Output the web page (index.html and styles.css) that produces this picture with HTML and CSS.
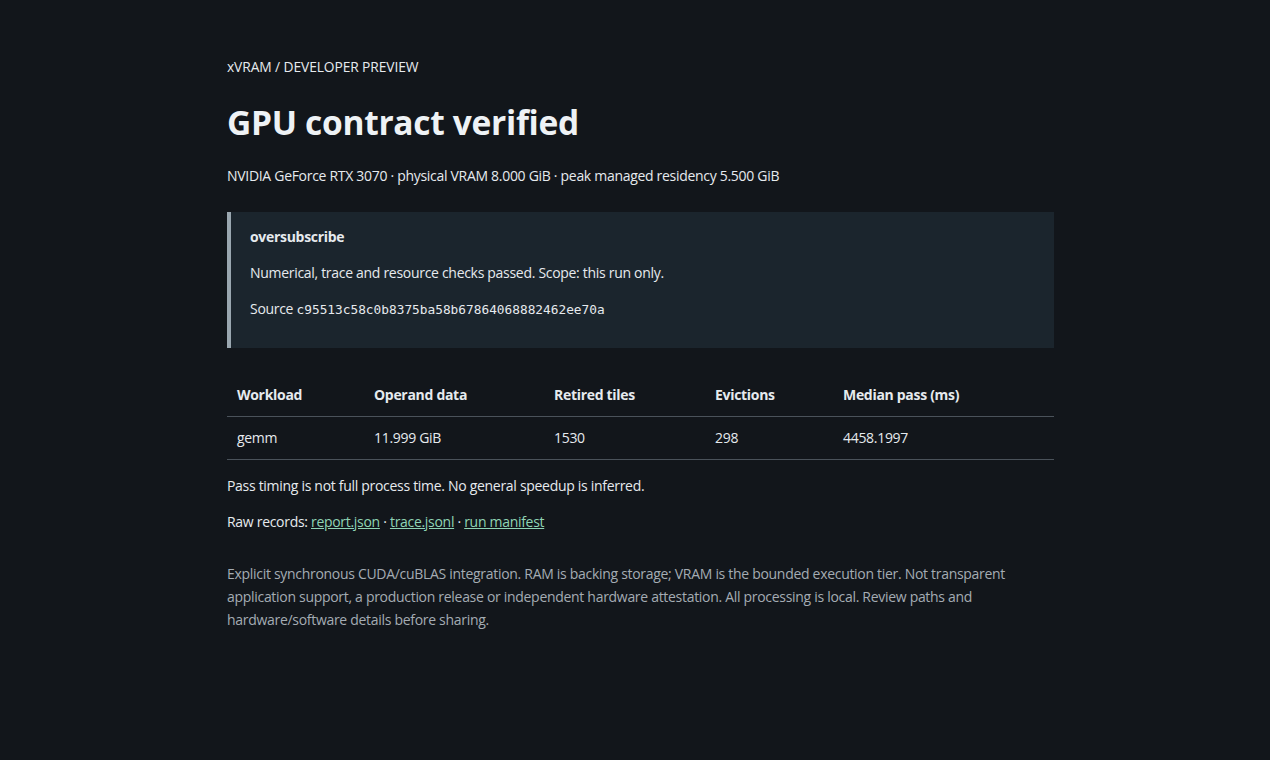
FILE: index.html
```html
<!DOCTYPE html>
<html lang="en">
<head>
    <meta charset="UTF-8">
    <meta name="viewport" content="width=device-width, initial-scale=1.0">
    <title>xVRAM - GPU contract verified</title>
    <link rel="stylesheet" href="styles.css">
</head>
<body>
    <main class="page">
        <p class="eyebrow">xVRAM / DEVELOPER PREVIEW</p>
        <h1>GPU contract verified</h1>
        <p class="device">NVIDIA GeForce RTX 3070 · physical VRAM 8.000 GiB · peak managed residency 5.500 GiB</p>

        <section class="verdict">
            <p class="verdict-name">oversubscribe</p>
            <p>Numerical, trace and resource checks passed. Scope: this run only.</p>
            <p>Source <code>c95513c58c0b8375ba58b67864068882462ee70a</code></p>
        </section>

        <table class="results">
            <thead>
                <tr>
                    <th class="col-workload">Workload</th>
                    <th class="col-operand">Operand data</th>
                    <th class="col-tiles">Retired tiles</th>
                    <th class="col-evictions">Evictions</th>
                    <th>Median pass (ms)</th>
                </tr>
            </thead>
            <tbody>
                <tr>
                    <td>gemm</td>
                    <td>11.999 GiB</td>
                    <td>1530</td>
                    <td>298</td>
                    <td>4458.1997</td>
                </tr>
            </tbody>
        </table>

        <p class="note">Pass timing is not full process time. No general speedup is inferred.</p>
        <p class="note">Raw records: <a href="report.json">report.json</a> · <a href="trace.jsonl">trace.jsonl</a> · <a href="manifest.json">run manifest</a></p>

        <p class="disclaimer">Explicit synchronous CUDA/cuBLAS integration. RAM is backing storage; VRAM is the bounded execution tier. Not transparent application support, a production release or independent hardware attestation. All processing is local. Review paths and hardware/software details before sharing.</p>
    </main>
</body>
</html>
```

FILE: styles.css
```css
body {
    font-family: "Open Sans", "Noto Sans", sans-serif;
    background-color: #12161b;
    color: #e6eaee;
    margin: 0;
    font-size: 14px;
}

.page {
    width: 827px;
    margin-left: 227px;
    padding-top: 58px;
}

p {
    margin: 0;
}

.eyebrow {
    font-size: 13.8px;
    line-height: 18px;
    letter-spacing: -0.1px;
}

h1 {
    font-size: 33.5px;
    font-weight: 700;
    line-height: 44px;
    margin: 24px 0 22px;
    color: #eef2f5;
    letter-spacing: -0.3px;
}

.device {
    font-size: 14px;
    line-height: 20px;
    letter-spacing: -0.3px;
}

.verdict {
    margin-top: 26px;
    background: #1b252d;
    border-left: 4px solid #9aa7b0;
    padding: 15px 19px 28px;
}

.verdict p {
    line-height: 20px;
    margin-bottom: 16px;
    letter-spacing: -0.3px;
}

.verdict p:last-child {
    margin-bottom: 0;
}

.verdict-name {
    font-weight: 700;
}

code {
    font-family: "DejaVu Sans Mono", monospace;
    font-size: 12.8px;
    letter-spacing: 0;
}

.results {
    width: 100%;
    border-collapse: collapse;
    margin-top: 26px;
}

.results th,
.results td {
    text-align: left;
    padding: 11px 10px;
    line-height: 20px;
    border-bottom: 1px solid #4a525a;
    letter-spacing: -0.3px;
}

.results th {
    font-weight: 700;
}

.col-workload { width: 117px; }
.col-operand { width: 160px; }
.col-tiles { width: 141px; }
.col-evictions { width: 108px; }

.note {
    margin-top: 15px;
    line-height: 21px;
    letter-spacing: -0.3px;
}

.note:first-of-type {
    margin-top: 16px;
}

a {
    color: #8fd4b4;
    text-decoration: underline;
}

.disclaimer {
    margin-top: 30px;
    line-height: 23px;
    color: #a4acb3;
    letter-spacing: -0.3px;
}
```
